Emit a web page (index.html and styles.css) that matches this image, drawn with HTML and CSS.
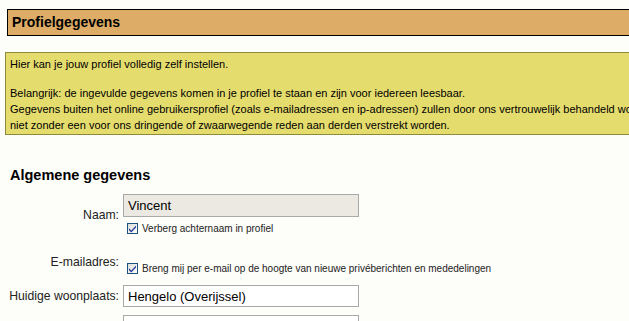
FILE: index.html
```html
<!DOCTYPE html>
<html lang="nl">
<head>
    <meta charset="UTF-8">
    <title>Profielgegevens</title>
    <link rel="stylesheet" href="styles.css">
</head>
<body>
    <div class="page-title">Profielgegevens</div>

    <div class="notice">
        <p>Hier kan je jouw profiel volledig zelf instellen.</p>
        <p>Belangrijk: de ingevulde gegevens komen in je profiel te staan en zijn voor iedereen leesbaar.<br>
        Gegevens buiten het online gebruikersprofiel (zoals e-mailadressen en ip-adressen) zullen door ons vertrouwelijk behandeld worden en<br>
        niet zonder een voor ons dringende of zwaarwegende reden aan derden verstrekt worden.</p>
    </div>

    <h2 class="section-title">Algemene gegevens</h2>

    <div class="form">
        <div class="row row-name">
            <label class="label">Naam:</label>
            <div class="field">
                <input class="text-input" type="text" value="Vincent" disabled>
                <div class="check-line">
                    <span class="check"><svg width="9" height="9" viewBox="0 0 9 9"><path d="M1 4.2 L3.3 6.6 L8 1.4 L8 3.4 L3.3 8.4 L1 6.2 Z" fill="#2b3d9c"/></svg></span>
                    Verberg achternaam in profiel
                </div>
            </div>
        </div>

        <div class="row row-mail">
            <label class="label">E-mailadres:</label>
            <div class="field">
                <div class="spacer"></div>
                <div class="check-line">
                    <span class="check"><svg width="9" height="9" viewBox="0 0 9 9"><path d="M1 4.2 L3.3 6.6 L8 1.4 L8 3.4 L3.3 8.4 L1 6.2 Z" fill="#2b3d9c"/></svg></span>
                    Breng mij per e-mail op de hoogte van nieuwe privéberichten en mededelingen
                </div>
            </div>
        </div>

        <div class="row row-city">
            <label class="label">Huidige woonplaats:</label>
            <div class="field">
                <input class="text-input" type="text" value="Hengelo (Overijssel)">
            </div>
        </div>

        <div class="row row-next">
            <label class="label"></label>
            <div class="field">
                <input class="text-input" type="text" value="">
            </div>
        </div>
    </div>
</body>
</html>
```

FILE: styles.css
```css
* {
    box-sizing: border-box;
    margin: 0;
    padding: 0;
}

body {
    font-family: "Liberation Sans", Arial, sans-serif;
    background: #fdfdf9;
    color: #000;
    overflow: hidden;
}

.page-title {
    margin: 9px 0 0 7px;
    height: 27px;
    line-height: 25px;
    padding-left: 4px;
    background: #ddac66;
    border: 1px solid #000;
    border-right: none;
    font-size: 14px;
    font-weight: bold;
    white-space: nowrap;
}

.notice {
    margin: 16px 0 0 5px;
    height: 83px;
    padding: 3px 4px 0;
    background: #e5dc6e;
    border: 1px solid #8d8a3a;
    border-right: none;
    font-size: 11px;
    line-height: 16px;
    white-space: nowrap;
    overflow: hidden;
}

.notice p + p {
    margin-top: 13px;
}

.section-title {
    margin: 31px 0 0 10px;
    font-size: 14.5px;
    line-height: 18px;
}

.form {
    margin-top: 10px;
}

.row {
    display: grid;
    grid-template-columns: 119px 236px;
    column-gap: 4px;
    align-items: center;
}

.label {
    text-align: right;
    font-size: 12.2px;
    color: #222;
    white-space: nowrap;
}

.row-mail {
    margin-top: 13px;
}

.row-city {
    margin-top: 10px;
}

.row-next {
    margin-top: 8px;
}

.text-input {
    display: block;
    width: 236px;
    height: 22px;
    padding: 0 4px;
    border: 1px solid #a8aaa8;
    background: #fff;
    font-family: "Liberation Sans", Arial, sans-serif;
    font-size: 13px;
    color: #000;
}

.text-input:disabled {
    background: #ebe9e1;
    color: #000;
}

.row-name .text-input {
    height: 23px;
}

.spacer {
    height: 14px;
}

.check-line {
    display: flex;
    align-items: center;
    gap: 4px;
    margin-top: 5px;
    padding-left: 4px;
    height: 13px;
    font-size: 10px;
    color: #222;
    white-space: nowrap;
}

.row-mail .check-line {
    margin-top: 0;
}

.check {
    display: flex;
    align-items: center;
    justify-content: center;
    width: 11px;
    height: 11px;
    border: 1px solid #1c5180;
    background: linear-gradient(135deg, #dcdcd7, #fff);
}
```
